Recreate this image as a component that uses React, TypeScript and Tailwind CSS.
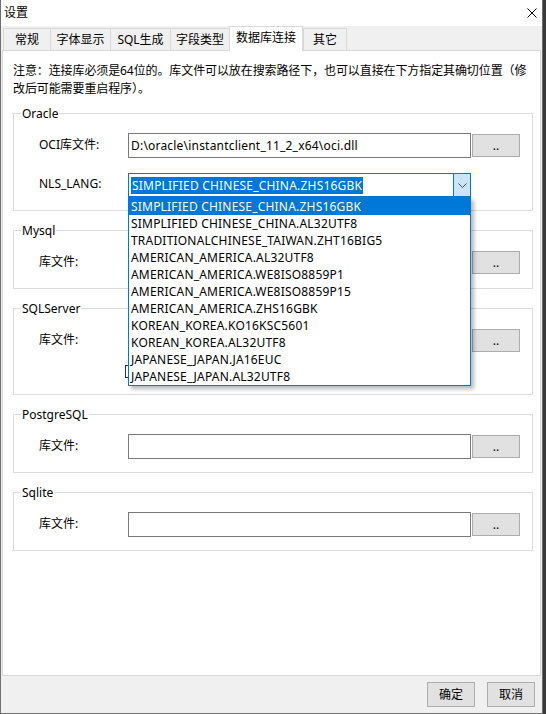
import React from 'react';

const langs = [
  'SIMPLIFIED CHINESE_CHINA.ZHS16GBK',
  'SIMPLIFIED CHINESE_CHINA.AL32UTF8',
  'TRADITIONALCHINESE_TAIWAN.ZHT16BIG5',
  'AMERICAN_AMERICA.AL32UTF8',
  'AMERICAN_AMERICA.WE8ISO8859P1',
  'AMERICAN_AMERICA.WE8ISO8859P15',
  'AMERICAN_AMERICA.ZHS16GBK',
  'KOREAN_KOREA.KO16KSC5601',
  'KOREAN_KOREA.AL32UTF8',
  'JAPANESE_JAPAN.JA16EUC',
  'JAPANESE_JAPAN.AL32UTF8',
];

const tabs = [
  { label: '常规', w: 'w-[47px]' },
  { label: '字体显示', w: 'w-[60px]' },
  { label: 'SQL生成', w: 'w-[60px]' },
  { label: '字段类型', w: 'w-[59px]' },
  { label: '数据库连接', w: 'w-[74px]', active: true },
  { label: '其它', w: 'w-[44px]' },
];

function Group({ title, children }: { title: string; children: React.ReactNode }) {
  return (
    <div className="relative ml-[10px] mr-[7px] border border-[#dcdcdc] pt-[19px] pb-[13px]">
      <span className="absolute left-[7px] top-0 -translate-y-1/2 bg-white px-[1px] leading-[16px]">{title}</span>
      {children}
    </div>
  );
}

function BrowseButton() {
  return (
    <button className="ml-[1px] flex h-[23px] w-[48px] items-end justify-center border border-[#adadad] bg-[#e1e1e1] pb-[4px] text-[12px] leading-[12px]">
      ..
    </button>
  );
}

function FileRow({ label, value = '' }: { label: string; value?: string }) {
  return (
    <div className="flex items-center pl-[25px]">
      <span className="w-[89px] -translate-y-[1px] leading-[16px]">{label}</span>
      <div className="flex h-[25px] w-[343px] items-center border border-[#7a7a7a] bg-white pl-[2px] tracking-[0.2px]">{value}</div>
      <BrowseButton />
    </div>
  );
}

export default function App() {
  return (
    <div className="flex h-[714px] w-[546px] bg-[#3a3a3a] font-['Noto_Sans','Noto_Sans_CJK_SC',sans-serif] text-[12px] text-black">
      <div className="flex h-[714px] w-[543px] flex-col border-x border-b border-[#6f6f6f] bg-[#f0f0f0]">
        {/* title bar */}
        <div className="flex h-[26px] items-center justify-between bg-white pl-[3px] pr-[5px]">
          <span className="leading-[16px]">设置</span>
          <svg width="10" height="10" viewBox="0 0 10 10">
            <path d="M0.5 0.5L9.5 9.5M9.5 0.5L0.5 9.5" stroke="#000" strokeWidth="1" />
          </svg>
        </div>

        {/* tabs */}
        <div className="flex h-[24px] items-end pl-[2px]">
          {tabs.map((t) =>
            t.active ? (
              <div
                key={t.label}
                className={`relative z-10 -mb-px flex h-[25px] items-center justify-center border-x border-t border-[#d9d9d9] bg-white pb-[2px] ${t.w}`}
              >
                {t.label}
              </div>
            ) : (
              <div
                key={t.label}
                className={`flex h-[22px] items-center justify-center border-l border-t border-[#d9d9d9] bg-[#f0f0f0] last:border-r ${t.w}`}
              >
                {t.label}
              </div>
            )
          )}
        </div>

        {/* panel */}
        <div className="mx-[1px] flex h-[626px] flex-col border border-[#d9d9d9] bg-white">
          <p className="overflow-hidden whitespace-nowrap pl-[10px] pt-[11px] leading-[18px] tracking-[-0.1px]">
            注意：连接库必须是64位的。库文件可以放在搜索路径下，也可以直接在下方指定其确切位置（修
            <br />
            改后可能需要重启程序）。
          </p>

          <div className="mt-[15px] flex flex-col gap-[19px]">
            <Group title="Oracle">
              <FileRow label="OCI库文件:" value="D:\oracle\instantclient_11_2_x64\oci.dll" />
              <div className="mt-[15px] flex items-center pl-[25px]">
                <span className="w-[89px] -translate-y-[1px] leading-[16px]">NLS_LANG:</span>
                <div className="relative w-[343px] tracking-[0.2px]">
                  <div className="flex h-[24px] items-center border border-[#0078d7] bg-white">
                    <div className="flex flex-1 items-center pl-[2px]">
                      <span className="bg-[#0078d7] px-[1px] leading-[17px] text-white">{langs[0]}</span>
                    </div>
                    <div className="flex h-full w-[17px] items-center justify-center border-l border-[#0078d7] bg-[#cce4f7]">
                      <svg width="9" height="5" viewBox="0 0 9 5">
                        <polyline points="0.5,0.5 4.5,4.5 8.5,0.5" fill="none" stroke="#505050" strokeWidth="1" />
                      </svg>
                    </div>
                  </div>
                  <ul className="absolute left-0 top-[24px] z-20 w-[343px] border border-[#0078d7] bg-white shadow-[3px_3px_4px_rgba(0,0,0,0.28)]">
                    {langs.map((l, i) => (
                      <li
                        key={l}
                        className={`flex h-[17px] items-center pl-[2px] leading-[17px] ${i === 0 ? 'bg-[#0078d7] text-white' : ''}`}
                      >
                        {l}
                      </li>
                    ))}
                  </ul>
                </div>
              </div>
            </Group>

            <Group title="Mysql">
              <FileRow label="库文件:" />
            </Group>

            <Group title="SQLServer">
              <FileRow label="库文件:" />
              <div className="mb-[3px] mt-[12px] flex h-[13px] pl-[111px]">
                <div className="h-[13px] w-[13px] border border-[#333333] bg-white" />
              </div>
            </Group>

            <Group title="PostgreSQL">
              <FileRow label="库文件:" />
            </Group>

            <Group title="Sqlite">
              <FileRow label="库文件:" />
            </Group>
          </div>
        </div>

        {/* bottom buttons */}
        <div className="flex h-[37px] items-start justify-end gap-[12px] pr-[7px] pt-[6px]">
          <button className="flex h-[25px] w-[48px] items-center justify-center border border-[#adadad] bg-[#e1e1e1]">确定</button>
          <button className="flex h-[25px] w-[48px] items-center justify-center border border-[#adadad] bg-[#e1e1e1]">取消</button>
        </div>
      </div>
    </div>
  );
}
